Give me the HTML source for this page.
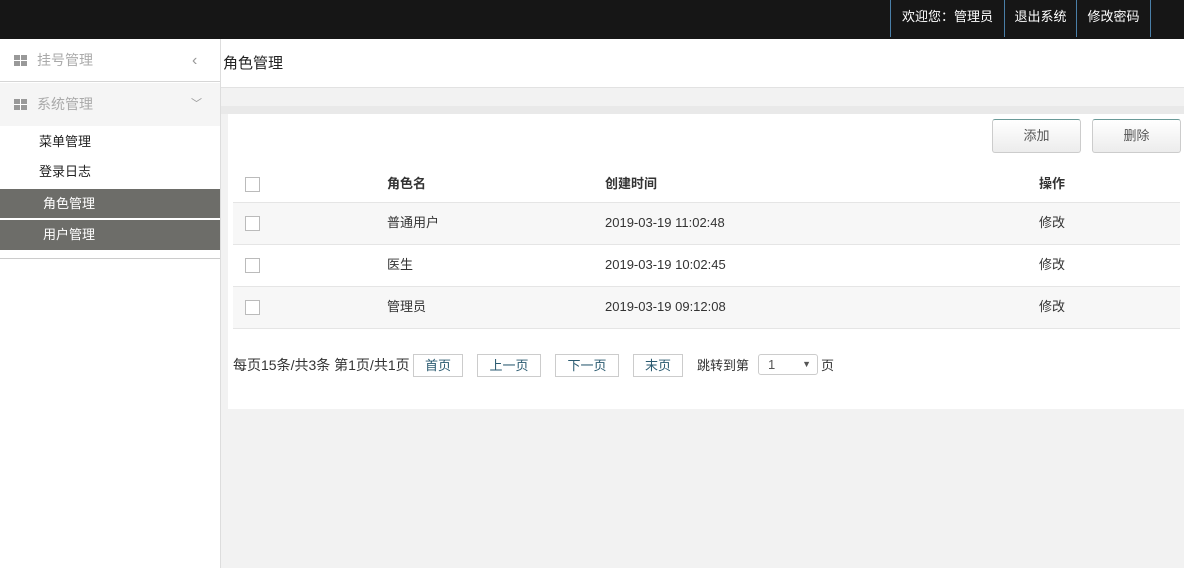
<!DOCTYPE html>
<html><head><meta charset="utf-8"><style>
*{margin:0;padding:0;box-sizing:border-box}
body{width:1184px;height:568px;overflow:hidden;background:#f2f2f2;font-family:"Liberation Sans","Noto Sans CJK SC",sans-serif;font-size:13px;color:#333;position:relative}
.top{position:absolute;left:0;top:0;width:1184px;height:39px;background:#161616}
.top span{position:absolute;top:0;height:37px;line-height:33px;color:#fff;font-size:13px;text-align:center;border-left:1px solid #4a7fa8}
.side{position:absolute;left:0;top:39px;width:221px;height:529px;background:#fff;border-right:1px solid #ddd}
.m{position:absolute;left:0;width:220px;height:43px;line-height:43px;color:#aaa;font-size:14px;padding-left:37px}
.ic{position:absolute;left:14px;top:16px;width:13px;height:11px;background:linear-gradient(#fff,#fff) 6px 0/1px 11px no-repeat,linear-gradient(#fff,#fff) 0 5px/13px 1px no-repeat,#999}
.s{position:absolute;left:0;width:220px;height:29px;line-height:29px;font-size:13px;color:#222;padding-left:39px}
.main{position:absolute;left:221px;top:39px;width:963px;height:49px;background:#fff;border-bottom:1px solid #e2e2e2}
.panel{position:absolute;left:228px;top:114px;width:956px;height:295px;background:#fff}
.btn{position:absolute;top:5px;width:89px;height:34px;border:1px solid #ccc;border-top:1px solid #6a9a98;border-radius:3px;background:linear-gradient(#fff,#ececec);text-align:center;line-height:32px;color:#555;font-size:13px}
.row{position:absolute;left:5px;width:947px;height:42px;border-bottom:1px solid #e5e5e5}
.row span{position:absolute;top:0;line-height:40px}
.cb{position:absolute;left:12px;top:13px;width:15px;height:15px;border:1px solid #bbb;background:#fff}
.pg{position:absolute;top:240px;height:23px;line-height:21px;border:1px solid #ccc;color:#2a5a70;text-align:center;font-size:13px}
</style></head><body>
<div class="top">
<span style="left:890px;width:114px">欢迎您：管理员</span>
<span style="left:1004px;width:72px">退出系统</span>
<span style="left:1076px;width:74px">修改密码</span>
<span style="left:1150px;width:1px"></span>
</div>
<div class="side">
<div class="m" style="top:0;border-bottom:1px solid #d6d6d6"><i class="ic"></i>挂号管理<span style="position:absolute;left:192px;color:#999;font-size:16px">‹</span></div>
<div class="m" style="top:44px;background:#f5f5f5;height:43px"><i class="ic"></i>系统管理<span style="position:absolute;left:191px;color:#999;font-size:11px">﹀</span></div>
<div class="s" style="top:88px">菜单管理</div>
<div class="s" style="top:118px">登录日志</div>
<div class="s" style="top:150px;height:29px;background:#6d6d69;color:#fff;padding-left:43px">角色管理</div>
<div class="s" style="top:181px;height:30px;background:#6d6d69;color:#fff;padding-left:43px">用户管理</div>
<div style="position:absolute;top:219px;left:0;width:220px;border-top:1px solid #ccc"></div>
</div>
<div class="main"><div style="position:absolute;left:2px;top:13px;font-size:15px;color:#222">角色管理</div></div>
<div style="position:absolute;left:221px;top:106px;width:963px;height:8px;background:#e9e9e9"></div>
<div class="panel">
<div class="btn" style="left:764px">添加</div>
<div class="btn" style="left:864px">删除</div>
<div class="row" style="top:50px;height:39px;font-weight:bold"><i class="cb"></i><span style="left:154px;line-height:40px">角色名</span><span style="left:372px">创建时间</span><span style="left:806px">操作</span></div>
<div class="row" style="top:89px;background:#f7f7f7"><i class="cb"></i><span style="left:154px">普通用户</span><span style="left:372px">2019-03-19 11:02:48</span><span style="left:806px">修改</span></div>
<div class="row" style="top:131px"><i class="cb"></i><span style="left:154px">医生</span><span style="left:372px">2019-03-19 10:02:45</span><span style="left:806px">修改</span></div>
<div class="row" style="top:173px;background:#f7f7f7"><i class="cb"></i><span style="left:154px">管理员</span><span style="left:372px">2019-03-19 09:12:08</span><span style="left:806px">修改</span></div>
<div style="position:absolute;left:5px;top:240px;line-height:23px;font-size:14px">每页15条/共3条 第1页/共1页</div>
<div class="pg" style="left:185px;width:50px">首页</div>
<div class="pg" style="left:249px;width:64px">上一页</div>
<div class="pg" style="left:327px;width:64px">下一页</div>
<div class="pg" style="left:405px;width:50px">末页</div>
<div style="position:absolute;left:469px;top:240px;line-height:23px">跳转到第</div>
<div style="position:absolute;left:530px;top:240px;width:60px;height:21px;border:1px solid #ccc;border-radius:3px;line-height:19px;padding-left:9px;color:#555">1<span style="position:absolute;right:6px;font-size:9px">▼</span></div>
<div style="position:absolute;left:593px;top:240px;line-height:23px">页</div>
</div>
</body></html>
